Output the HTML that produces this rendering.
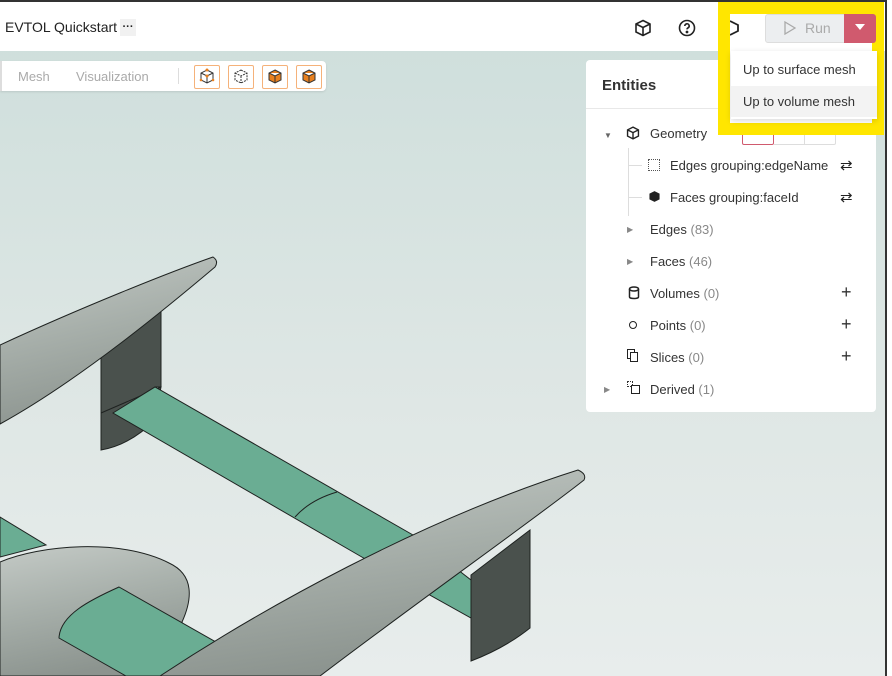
<!DOCTYPE html>
<html><head><meta charset="utf-8"><style>
*{box-sizing:border-box;margin:0;padding:0}
body{width:892px;height:676px;overflow:hidden;position:relative;font-family:"Liberation Sans",sans-serif;background:linear-gradient(180deg,#cddedb 0%,#dfe7e5 60%,#e8edec 100%);color:#222}
.top{position:absolute;left:0;top:0;width:892px;height:51px;background:#fff;border-top:2px solid #333}
.abs{position:absolute}
.tb{position:absolute;left:0;top:61px;width:326px;height:30px;background:#fff;border-radius:0 4px 4px 0;box-shadow:0 1px 2px rgba(0,0,0,.1)}
.ib{position:absolute;top:4px;width:26px;height:24px;border:1px solid #f5b27a;border-radius:2px}
.panel{position:absolute;left:586px;top:60px;width:290px;height:352px;background:#fff;border-radius:4px}
.row{position:absolute;font-size:13px;color:#333}
.row span{color:#888}
.plus{position:absolute;left:255px;font-size:18px;color:#333}
</style></head><body>
<svg class="abs" style="left:0;top:0" width="886" height="676">
<defs>
<linearGradient id="pg" x1="0" y1="0" x2="0.3" y2="1"><stop offset="0" stop-color="#c4cac6"/><stop offset="0.5" stop-color="#a7afaa"/><stop offset="1" stop-color="#8c948f"/></linearGradient>
</defs>
<g stroke="#1e2220" stroke-width="1">
<polygon points="0,517 46,545 0,557" fill="#6aad93"/>
<polygon points="101,350 161,300 161,387 155,387 113,413 101,413" fill="#4a514d"/>
<path d="M101,413 L101,450 Q130,445 155,420 L161,387 Z" fill="#4a514d"/>
<polygon points="113,413 155,387 413,535 471,580 471,618 367,560" fill="#6aad93"/>
<path d="M337,492 Q310,500 295,517" fill="none"/>
<path d="M471,575 L530,530 L530,628 Q505,648 471,661 Z" fill="#4a514d"/>
<path d="M0,562 C40,545 120,538 169,563 C195,575 192,600 182,622 L200,676 L0,676 Z" fill="url(#pg)"/>
<path d="M59,638 C60,615 90,600 119,587 L230,650 L240,676 L126,676 Z" fill="#6aad93"/>
<path d="M0,345 C80,308 170,272 213,257 Q219,261 215,267 C170,305 80,380 0,424 Z" fill="url(#pg)"/>
<path d="M160,676 C260,610 420,520 578,470 Q587,474 584,480 C540,515 420,600 320,676 Z" fill="url(#pg)"/>
</g>
</svg>
<div class="top"></div>
<div class="abs" style="left:5px;top:19px;font-size:14px">EVTOL Quickstart</div>
<div class="abs" style="left:120px;top:19px;width:16px;height:17px;background:#f1f1f1;font-size:11px;text-align:center;line-height:16px;font-weight:bold">···</div>
<svg class="abs" style="left:634px;top:19px" width="18" height="18" viewBox="0 0 18 18" fill="none" stroke="#222" stroke-width="1.6"><path d="M9 1.5 16 5v8l-7 3.5L2 13V5z M2 5l7 3.5L16 5 M9 8.5v8"/></svg>
<svg class="abs" style="left:678px;top:19px" width="18" height="18" viewBox="0 0 18 18" fill="none" stroke="#222" stroke-width="1.6"><circle cx="9" cy="9" r="7.5"/><path d="M6.8 7a2.2 2.2 0 1 1 3 2c-.6.3-.8.7-.8 1.4"/><circle cx="9" cy="13" r=".6" fill="#222"/></svg>
<div class="tb">
<div class="abs" style="left:0;top:0;width:2px;height:30px;background:#ddd"></div>
<div class="abs" style="left:18px;top:8px;font-size:13px;color:#aaa">Mesh</div>
<div class="abs" style="left:76px;top:8px;font-size:13px;color:#aaa">Visualization</div>
<div class="abs" style="left:178px;top:7px;width:1px;height:16px;background:#ddd"></div>
<div class="ib" style="left:194px"></div><div class="ib" style="left:228px"></div><div class="ib" style="left:262px"></div><div class="ib" style="left:296px"></div>
<svg class="abs" style="left:199px;top:7px" width="120" height="18"><g stroke="#333" fill="none" stroke-width="1"><path d="M8 2 14 5v7l-6 3-6-3V5z M2 5l6 3 6-3 M8 8v7"/><path transform="translate(34)" d="M8 2 14 5v7l-6 3-6-3V5z M2 5l6 3 6-3 M8 8v7" stroke-dasharray="2 1"/><path transform="translate(68)" d="M8 2 14 5v7l-6 3-6-3V5z M2 5l6 3 6-3 M8 8v7" fill="#e8801f"/><path transform="translate(102)" d="M8 2 14 5v7l-6 3-6-3V5z M2 5l6 3 6-3 M8 8v7" fill="#e8801f"/></g><circle cx="8" cy="2" r="1.5" fill="#e8801f"/><circle cx="8" cy="8" r="1.5" fill="#e8801f"/><circle cx="2" cy="12" r="1.3" fill="#e8801f"/><circle cx="14" cy="12" r="1.3" fill="#e8801f"/></svg>
</div>
<div class="panel">
<div class="abs" style="left:16px;top:17px;font-size:15px;font-weight:bold;color:#333">Entities</div>
<div class="abs" style="left:0;top:48px;width:290px;height:1px;background:#e8e8e8"></div>
<div class="abs" style="left:18px;top:71px;font-size:8px;color:#666">▼</div>
<svg class="abs" style="left:40px;top:66px" width="14" height="14" viewBox="0 0 18 18" fill="none" stroke="#222" stroke-width="1.8"><path d="M9 1.5 16 5v8l-7 3.5L2 13V5z M2 5l7 3.5L16 5 M9 8.5v8"/></svg>
<div class="row" style="left:64px;top:66px">Geometry</div>
<div class="abs" style="left:156px;top:55px;width:32px;height:30px;border:1px solid #d05a6e;border-radius:2px"></div>
<div class="abs" style="left:188px;top:55px;width:31px;height:30px;border:1px solid #ddd;border-left:none"></div>
<div class="abs" style="left:219px;top:55px;width:31px;height:30px;border:1px solid #ddd;border-left:none;border-radius:0 2px 2px 0"></div>
<div class="abs" style="left:42px;top:88px;width:1px;height:68px;background:#ddd"></div>
<div class="abs" style="left:42px;top:105px;width:14px;height:1px;background:#ddd"></div>
<div class="abs" style="left:42px;top:137px;width:14px;height:1px;background:#ddd"></div>
<div class="abs" style="left:62px;top:99px;width:12px;height:12px;border:1px dotted #555"></div>
<div class="row" style="left:84px;top:98px">Edges grouping:edgeName</div>
<div class="abs" style="left:254px;top:96px;font-size:15px">⇄</div>
<svg class="abs" style="left:62px;top:130px" width="13" height="13" viewBox="0 0 18 18"><path d="M9 1.5 16 5v8l-7 3.5L2 13V5z" fill="#222"/></svg>
<div class="row" style="left:84px;top:130px">Faces grouping:faceId</div>
<div class="abs" style="left:254px;top:128px;font-size:15px">⇄</div>
<div class="abs" style="left:41px;top:165px;font-size:8px;color:#888">▶</div>
<div class="row" style="left:64px;top:162px">Edges <span>(83)</span></div>
<div class="abs" style="left:41px;top:197px;font-size:8px;color:#888">▶</div>
<div class="row" style="left:64px;top:194px">Faces <span>(46)</span></div>
<svg class="abs" style="left:42px;top:226px" width="12" height="14"><ellipse cx="6" cy="3" rx="4.5" ry="2" fill="none" stroke="#222" stroke-width="1.5"/><path d="M1.5 3v8c0 2 9 2 9 0V3" fill="none" stroke="#222" stroke-width="1.5"/></svg>
<div class="row" style="left:64px;top:226px">Volumes <span>(0)</span></div><div class="plus" style="top:222px">+</div>
<div class="abs" style="left:43px;top:261px;width:8px;height:8px;border:1.5px solid #222;border-radius:50%"></div>
<div class="row" style="left:64px;top:258px">Points <span>(0)</span></div><div class="plus" style="top:254px">+</div>
<div class="abs" style="left:41px;top:289px;width:8px;height:10px;border:1.5px solid #222"></div><div class="abs" style="left:44px;top:292px;width:8px;height:10px;border:1.5px solid #222;background:#fff"></div>
<div class="row" style="left:64px;top:290px">Slices <span>(0)</span></div><div class="plus" style="top:286px">+</div>
<div class="abs" style="left:18px;top:325px;font-size:8px;color:#888">▶</div>
<div class="abs" style="left:41px;top:321px;width:6px;height:6px;border:1px dotted #333"></div><div class="abs" style="left:45px;top:325px;width:9px;height:9px;border:1.5px solid #222;background:#fff"></div>
<div class="row" style="left:64px;top:322px">Derived <span>(1)</span></div>
</div>
<div class="abs" style="left:718px;top:2px;width:166px;height:133px;border:12px solid #ffe600;background:transparent"></div>
<div class="abs" style="left:730px;top:14px;width:142px;height:109px;background:#fff"></div>
<svg class="abs" style="left:730px;top:18px" width="12" height="20"><path d="M0 3 L8 7 L8 13 L0 17" fill="none" stroke="#222" stroke-width="1.8"/></svg>
<div class="abs" style="left:765px;top:14px;width:80px;height:29px;background:#eceef0;border:1px solid #ddd;border-radius:3px 0 0 3px"></div>
<svg class="abs" style="left:784px;top:21px" width="12" height="14"><path d="M1 1 11 7 1 13z" fill="none" stroke="#aaa" stroke-width="1.3"/></svg>
<div class="abs" style="left:805px;top:20px;font-size:14px;color:#aaa">Run</div>
<div class="abs" style="left:844px;top:14px;width:32px;height:29px;background:#d05a6e;border-radius:0 3px 3px 0"></div>
<div class="abs" style="left:855px;top:24px;width:0;height:0;border-left:5px solid transparent;border-right:5px solid transparent;border-top:6px solid #fff"></div>
<div class="abs" style="left:731px;top:51px;width:146px;height:68px;background:#fff;box-shadow:0 2px 6px rgba(0,0,0,.15)"></div>
<div class="abs" style="left:731px;top:86px;width:146px;height:31px;background:#f3f3f3"></div>
<div class="abs" style="left:743px;top:62px;font-size:13px;color:#333">Up to surface mesh</div>
<div class="abs" style="left:743px;top:94px;font-size:13px;color:#333">Up to volume mesh</div>
<div class="abs" style="left:885px;top:0;width:2px;height:676px;background:#333"></div>
<div class="abs" style="left:887px;top:0;width:5px;height:676px;background:#fff"></div>
</body></html>
